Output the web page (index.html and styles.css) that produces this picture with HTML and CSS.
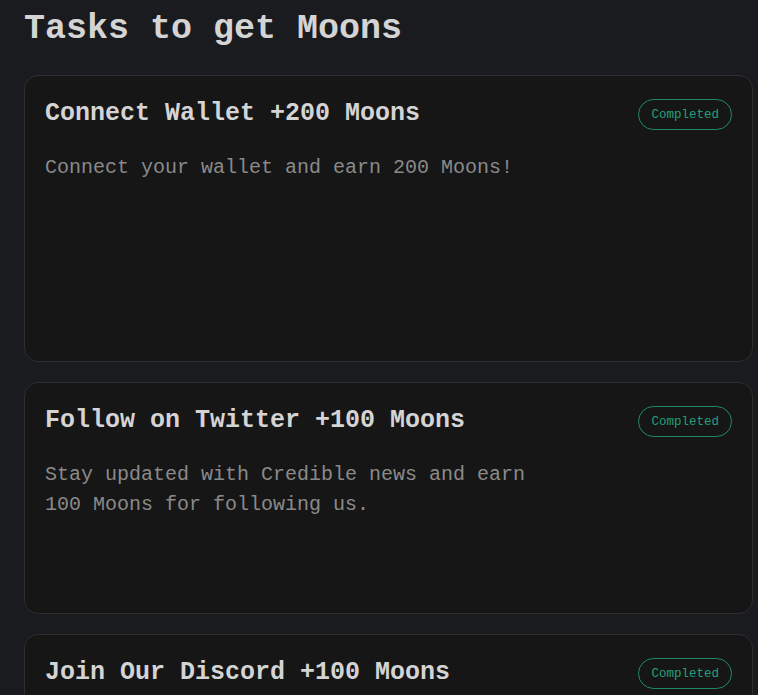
FILE: index.html
```html
<!DOCTYPE html>
<html lang="en">
<head>
<meta charset="utf-8">
<title>Tasks to get Moons</title>
<link rel="stylesheet" href="styles.css">
</head>
<body>
<main class="page">
  <h1 class="title">Tasks to get Moons</h1>
  <section class="tasks">
    <article class="card card-tall">
      <div class="card-head">
        <h2 class="card-title">Connect Wallet +200 Moons</h2>
        <span class="badge">Completed</span>
      </div>
      <p class="card-desc">Connect your wallet and earn 200 Moons!</p>
    </article>
    <article class="card card-mid">
      <div class="card-head">
        <h2 class="card-title">Follow on Twitter +100 Moons</h2>
        <span class="badge">Completed</span>
      </div>
      <p class="card-desc">Stay updated with Credible news and earn 100 Moons for following us.</p>
    </article>
    <article class="card card-mid">
      <div class="card-head">
        <h2 class="card-title">Join Our Discord +100 Moons</h2>
        <span class="badge">Completed</span>
      </div>
      <p class="card-desc">Join our Discord community and earn 100 Moons.</p>
    </article>
  </section>
</main>
</body>
</html>
```
FILE: styles.css
```css
html, body {
  margin: 0;
  padding: 0;
  background: #1a1b1f;
}
body {
  font-family: "Liberation Mono", "Courier New", monospace;
  color: #d6d6d6;
  overflow: hidden;
}
.page {
  padding: 3px 5px 0 24px;
}
.title {
  margin: 0 0 20px;
  font-size: 35px;
  line-height: 52px;
  font-weight: 700;
  color: #d4d4d4;
}
.tasks {
  display: flex;
  flex-direction: column;
  gap: 20px;
}
.card {
  box-sizing: border-box;
  background: #161617;
  border: 1px solid #2d2e30;
  border-radius: 14px;
  padding: 22px 20px 20px;
}
.card-tall { min-height: 287px; }
.card-mid { min-height: 232px; }
.card-head {
  display: flex;
  justify-content: space-between;
  align-items: flex-start;
}
.card-title {
  margin: 0;
  font-size: 25px;
  line-height: 32px;
  font-weight: 700;
  color: #d4d4d4;
}
.badge {
  margin-top: 1px;
  box-sizing: border-box;
  height: 31px;
  padding: 0 12px;
  display: flex;
  align-items: center;
  border: 1px solid #1e8a66;
  border-radius: 999px;
  font-size: 12.5px;
  color: #22a077;
}
.card-desc {
  margin: 23px 0 0;
  max-width: 500px;
  font-size: 20px;
  line-height: 30px;
  color: #8a8a8a;
}
```
